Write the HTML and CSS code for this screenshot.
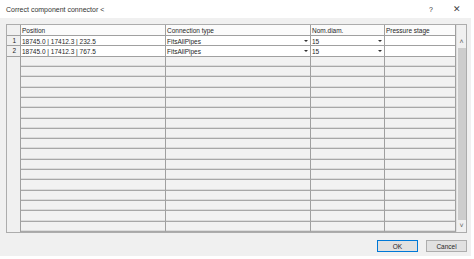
FILE: index.html
```html
<!DOCTYPE html>
<html lang="en">
<head>
    <meta charset="UTF-8">
    <title>Correct component connector</title>
    <link rel="stylesheet" href="styles.css">
</head>
<body>
    <div class="titlebar">
        <span class="title">Correct component connector &lt;</span>
        <span class="help">?</span>
        <span class="close">&#x2715;</span>
    </div>
    <div class="dialog">
        <div class="grid">
            <div class="table" id="table">
                <div class="cell corner"></div>
                <div class="cell head">Position</div>
                <div class="cell head">Connection type</div>
                <div class="cell head">Nom.diam.</div>
                <div class="cell head">Pressure stage</div>

                <div class="cell rowhead">1</div>
                <div class="cell data">18745.0 | 17412.3 | 232.5</div>
                <div class="cell data combo">FitsAllPipes<span class="arrow"></span></div>
                <div class="cell data combo">15<span class="arrow"></span></div>
                <div class="cell data"></div>

                <div class="cell rowhead">2</div>
                <div class="cell data">18745.0 | 17412.3 | 767.5</div>
                <div class="cell data combo">FitsAllPipes<span class="arrow"></span></div>
                <div class="cell data combo">15<span class="arrow"></span></div>
                <div class="cell data"></div>
            </div>
            <div class="scrollbar">
                <div class="sb-arrow">&#x2C4;</div>
                <div class="thumb"></div>
                <div class="sb-arrow">&#x2C5;</div>
            </div>
        </div>
        <div class="buttons">
            <button class="btn default">OK</button>
            <button class="btn">Cancel</button>
        </div>
    </div>
    <script>
        // fill the grid with empty rows
        var table = document.getElementById("table");
        for (var i = 0; i < 17; i++) {
            var html = '<div class="cell rowhead empty"></div>';
            for (var c = 0; c < 4; c++) {
                html += '<div class="cell blank"></div>';
            }
            table.insertAdjacentHTML("beforeend", html);
        }
    </script>
</body>
</html>
```

FILE: styles.css
```css
body {
    margin: 0;
    width: 474px;
    height: 259px;
    background-color: #fff;
    font-family: "Liberation Sans", Arial, sans-serif;
    color: #1e1e1e;
    overflow: hidden;
}

.titlebar {
    height: 18px;
    display: flex;
    align-items: center;
    font-size: 7px;
    padding-left: 6px;
}

.title {
    flex: 1;
    color: #333;
}

.help {
    width: 26px;
    text-align: center;
    font-size: 7px;
    color: #333;
}

.close {
    width: 26px;
    margin-right: 4px;
    text-align: center;
    font-size: 9px;
    color: #444;
}

.dialog {
    width: 471px;
    height: 238px;
    box-sizing: border-box;
    background-color: #f0f0f0;
    padding: 6px 0 0 6px;
}

.grid {
    width: 461px;
    height: 209px;
    box-sizing: border-box;
    border: 1px solid #acacac;
    display: flex;
    background-color: #f2f2f2;
}

.table {
    display: grid;
    grid-template-columns: 14px 145px 145px 74px 71px;
    grid-template-rows: 11px repeat(19, 1fr);
    width: 449px;
}

.cell {
    box-sizing: border-box;
    border-right: 1px solid #a0a0a0;
    border-bottom: 1px solid #a0a0a0;
    font-size: 6.5px;
    line-height: 9px;
    padding-left: 1px;
    white-space: nowrap;
    overflow: hidden;
}

.corner {
    background-color: #f0f0f0;
}

.head {
    background-color: #fbfbfb;
    padding-top: 1px;
}

.rowhead {
    background-color: #f0f0f0;
    text-align: right;
    padding-right: 4px;
}

.rowhead.empty {
    border-bottom: none;
}

.data {
    background-color: #fff;
    padding-top: 1px;
}

.blank {
    background-color: #f2f2f2;
    border-bottom-color: #a8a8a8;
    box-shadow: inset 0 -1px 0 #dcdcdc;
}

.combo {
    position: relative;
}

.arrow {
    position: absolute;
    right: 2px;
    top: 4px;
    border-left: 2px solid transparent;
    border-right: 2px solid transparent;
    border-top: 2px solid #333;
}

.scrollbar {
    width: 10px;
    display: flex;
    flex-direction: column;
    align-items: center;
    background-color: #f0f0f0;
    border-left: 1px solid #e0e0e0;
    box-sizing: border-box;
    padding-top: 11px;
}

.sb-arrow {
    height: 12px;
    font-size: 7px;
    line-height: 12px;
    color: #606060;
}

.thumb {
    flex: 1;
    width: 8px;
    background-color: #cdcdcd;
}

.buttons {
    display: flex;
    justify-content: flex-end;
    gap: 8px;
    width: 461px;
    margin-top: 7px;
}

.btn {
    width: 41px;
    height: 12px;
    padding: 0;
    box-sizing: border-box;
    background-color: #e1e1e1;
    border: 1px solid #adadad;
    font-family: "Liberation Sans", Arial, sans-serif;
    font-size: 6.5px;
    color: #1e1e1e;
}

.btn.default {
    border-color: #0078d7;
}
```
